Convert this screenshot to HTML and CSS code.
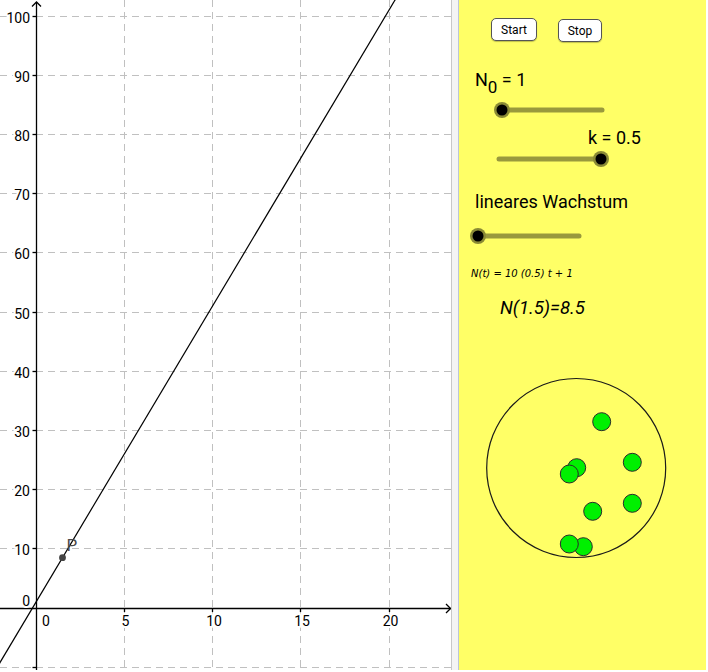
FILE: index.html
```html
<!DOCTYPE html>
<html>
<head>
<meta charset="utf-8">
<link rel="stylesheet" href="styles.css">
</head>
<body>
<div class="app">
  <div class="graph">
    <svg class="graph-svg" width="451" height="670" viewBox="0 0 451 670">
      <g class="grid">
        <line x1="124.5" y1="0" x2="124.5" y2="670"/>
        <line x1="212.5" y1="0" x2="212.5" y2="670"/>
        <line x1="300.5" y1="0" x2="300.5" y2="670"/>
        <line x1="389.5" y1="0" x2="389.5" y2="670"/>
        <line x1="0" y1="16.5" x2="451" y2="16.5"/>
        <line x1="0" y1="75.5" x2="451" y2="75.5"/>
        <line x1="0" y1="134.5" x2="451" y2="134.5"/>
        <line x1="0" y1="193.5" x2="451" y2="193.5"/>
        <line x1="0" y1="252.5" x2="451" y2="252.5"/>
        <line x1="0" y1="312.5" x2="451" y2="312.5"/>
        <line x1="0" y1="371.5" x2="451" y2="371.5"/>
        <line x1="0" y1="430.5" x2="451" y2="430.5"/>
        <line x1="0" y1="489.5" x2="451" y2="489.5"/>
        <line x1="0" y1="548.5" x2="451" y2="548.5"/>
        <line x1="0" y1="667.5" x2="451" y2="667.5"/>
      </g>
      <g class="axis">
        <line x1="36.5" y1="2" x2="36.5" y2="670"/>
        <line x1="0" y1="608.5" x2="450.5" y2="608.5"/>
        <polyline points="32,6.5 36.5,2 41,6.5"/>
        <polyline points="446,604 450.5,608.5 446,613"/>
        <line x1="32.5" y1="16.5" x2="36.5" y2="16.5"/>
        <line x1="32.5" y1="75.5" x2="36.5" y2="75.5"/>
        <line x1="32.5" y1="134.5" x2="36.5" y2="134.5"/>
        <line x1="32.5" y1="193.5" x2="36.5" y2="193.5"/>
        <line x1="32.5" y1="252.5" x2="36.5" y2="252.5"/>
        <line x1="32.5" y1="312.5" x2="36.5" y2="312.5"/>
        <line x1="32.5" y1="371.5" x2="36.5" y2="371.5"/>
        <line x1="32.5" y1="430.5" x2="36.5" y2="430.5"/>
        <line x1="32.5" y1="489.5" x2="36.5" y2="489.5"/>
        <line x1="32.5" y1="548.5" x2="36.5" y2="548.5"/>
        <line x1="32.5" y1="667.5" x2="36.5" y2="667.5"/>
        <line x1="124.5" y1="608.5" x2="124.5" y2="612"/>
        <line x1="212.5" y1="608.5" x2="212.5" y2="612"/>
        <line x1="300.5" y1="608.5" x2="300.5" y2="612"/>
        <line x1="389.5" y1="608.5" x2="389.5" y2="612"/>
      </g>
      <g class="ylabels">
        <text x="30" y="22.5">100</text>
        <text x="30" y="81.5">90</text>
        <text x="30" y="140.5">80</text>
        <text x="30" y="199.5">70</text>
        <text x="30" y="258.5">60</text>
        <text x="30" y="318.5">50</text>
        <text x="30" y="377.5">40</text>
        <text x="30" y="436.5">30</text>
        <text x="30" y="495.5">20</text>
        <text x="30" y="554.5">10</text>
        <text x="30" y="605.5">0</text>
      </g>
      <g class="xlabels">
        <text x="46" y="626">0</text>
        <text x="125.5" y="626">5</text>
        <text x="214" y="626">10</text>
        <text x="302" y="626">15</text>
        <text x="390.5" y="626">20</text>
      </g>
      <line class="fn" x1="-16.95" y1="690.9" x2="406.65" y2="-19.5"/>
      <circle class="pt" cx="62.5" cy="557.7" r="3.4"/>
      <text class="ptlabel" x="66.5" y="551">P</text>
    </svg>
  </div>
  <div class="divider"></div>
  <div class="panel">
    <div class="buttons">
      <button class="btn btn-start">Start</button>
      <button class="btn btn-stop">Stop</button>
    </div>
    <div class="lbl lbl-n0">N<span class="sub">0</span> = 1</div>
    <svg class="slider slider-1" width="130" height="18" viewBox="0 0 130 18">
      <line class="track" x1="9" y1="9" x2="109" y2="9"/>
      <circle class="halo" cx="9" cy="9" r="8"/>
      <circle class="knob" cx="9" cy="9" r="5.5"/>
    </svg>
    <div class="lbl lbl-k">k = 0.5</div>
    <svg class="slider slider-2" width="130" height="18" viewBox="0 0 130 18">
      <line class="track" x1="9" y1="9" x2="109" y2="9"/>
      <circle class="halo" cx="111" cy="9" r="8"/>
      <circle class="knob" cx="111" cy="9" r="5.5"/>
    </svg>
    <div class="lbl lbl-lin">lineares Wachstum</div>
    <svg class="slider slider-3" width="130" height="18" viewBox="0 0 130 18">
      <line class="track" x1="9" y1="9" x2="110" y2="9"/>
      <circle class="halo" cx="9" cy="9" r="8"/>
      <circle class="knob" cx="9" cy="9" r="5.5"/>
    </svg>
    <div class="formula">N(t) = 10 (0.5) t + 1</div>
    <div class="value">N(1.5)=8.5</div>
    <svg class="pool" width="200" height="200" viewBox="0 0 200 200">
      <circle class="ring" cx="100.2" cy="100" r="89.5"/>
      <circle class="cell" cx="125.7" cy="53.7" r="9"/>
      <circle class="cell" cx="100.7" cy="99.7" r="9"/>
      <circle class="cell" cx="93.3" cy="106" r="9"/>
      <circle class="cell" cx="156.3" cy="94.3" r="9"/>
      <circle class="cell" cx="156.3" cy="135.3" r="9"/>
      <circle class="cell" cx="116.7" cy="143.3" r="9"/>
      <circle class="cell" cx="107.3" cy="178.7" r="9"/>
      <circle class="cell" cx="93.3" cy="176" r="9"/>
    </svg>
  </div>
</div>
</body>
</html>
```

FILE: styles.css
```css
html, body {
  margin: 0;
  padding: 0;
  background: #ffffff;
}

.app {
  display: flex;
  width: 706px;
  height: 670px;
  font-family: Roboto, "Liberation Sans", sans-serif;
}

.graph {
  width: 451px;
  height: 670px;
  background: #ffffff;
}

.graph-svg {
  display: block;
}

.grid line {
  stroke: #c0c0c0;
  stroke-width: 1;
  stroke-dasharray: 7 5;
}

.axis line,
.axis polyline {
  stroke: #000000;
  stroke-width: 1.3;
  fill: none;
}

.ylabels text,
.xlabels text {
  font-family: Roboto, "Liberation Sans", sans-serif;
  font-size: 14px;
  fill: #000000;
  stroke: #ffffff;
  stroke-width: 4px;
  paint-order: stroke;
  stroke-linejoin: round;
}

.ylabels text {
  text-anchor: end;
}

.xlabels text {
  text-anchor: middle;
}

.fn {
  stroke: #000000;
  stroke-width: 1.2;
}

.pt {
  fill: #444444;
}

.ptlabel {
  font-family: Roboto, "Liberation Sans", sans-serif;
  font-size: 17px;
  fill: #4a4a4a;
}

.divider {
  width: 8px;
  box-sizing: border-box;
  border-left: 1px solid #c8c8c8;
  border-right: 1px solid #bcc6d8;
  background: #f4f4f4;
}

.panel {
  width: 247px;
  height: 670px;
  background: #ffff66;
  color: #000000;
}

.buttons {
  display: flex;
  align-items: flex-start;
  padding-top: 18px;
  padding-left: 32px;
  height: 24px;
}

.btn {
  box-sizing: border-box;
  height: 23px;
  padding: 0;
  margin: 0;
  background: #ffffff;
  border: 1px solid #555555;
  border-radius: 5px;
  box-shadow: 0 1px 1px rgba(0, 0, 0, 0.25);
  font-family: Roboto, "Liberation Sans", sans-serif;
  font-size: 12px;
  color: #000000;
}

.btn-start {
  width: 46px;
}

.btn-stop {
  width: 44px;
  margin-left: 21px;
  margin-top: 1px;
}

.lbl {
  font-size: 18px;
  line-height: 22px;
  height: 22px;
  white-space: nowrap;
}

.sub {
  font-size: 17px;
  vertical-align: -7px;
  line-height: 0;
}

.lbl-n0 {
  margin-top: 27px;
  margin-left: 16px;
}

.slider {
  display: block;
}

.slider .track {
  stroke: #99993d;
  stroke-width: 5;
  stroke-linecap: round;
}

.slider .halo {
  fill: #8a8a36;
}

.slider .knob {
  fill: #000000;
}

.slider-1 {
  margin-top: 10px;
  margin-left: 34px;
}

.lbl-k {
  margin-top: 8px;
  margin-left: 129px;
}

.slider-2 {
  margin-top: 1px;
  margin-left: 31px;
}

.lbl-lin {
  margin-top: 23px;
  margin-left: 16px;
}

.slider-3 {
  margin-top: 14px;
  margin-left: 10px;
}

.formula {
  margin-top: 22px;
  margin-left: 12px;
  font-family: "DejaVu Sans", Roboto, sans-serif;
  font-size: 10px;
  line-height: 14px;
  font-style: italic;
  white-space: nowrap;
}

.value {
  margin-top: 16px;
  margin-left: 41px;
  font-size: 18.5px;
  line-height: 22px;
  font-style: italic;
  white-space: nowrap;
}

.pool {
  display: block;
  margin-top: 49px;
  margin-left: 17px;
}

.pool .ring {
  fill: none;
  stroke: #1a1a1a;
  stroke-width: 1.2;
}

.pool .cell {
  fill: #00f000;
  stroke: #2a2a2a;
  stroke-width: 1;
}
```
